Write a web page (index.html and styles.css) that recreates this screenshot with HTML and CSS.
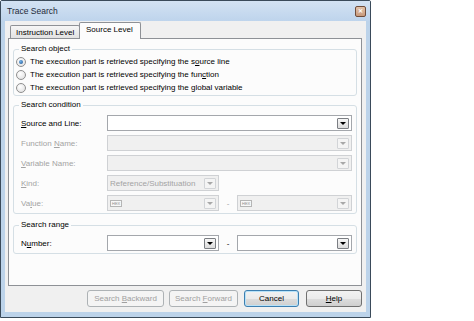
FILE: index.html
```html
<!DOCTYPE html>
<html lang="en">
<head>
  <meta charset="UTF-8">
  <title>Trace Search</title>
  <link rel="stylesheet" href="styles.css">
</head>
<body>
  <div class="window">
    <div class="titlebar">
      <span class="title">Trace Search</span>
      <span class="close">&#x2715;</span>
    </div>

    <div class="client">
      <div class="tabs">
        <div class="tab">Instruction Level</div>
        <div class="tab active">Source Level</div>
      </div>

      <div class="panel">
        <fieldset class="group g-object">
          <legend>Search object</legend>
          <label class="radio"><span class="dot checked"></span><span>The execution part is retrieved specifying the s<u>o</u>urce line</span></label>
          <label class="radio"><span class="dot"></span><span>The execution part is retrieved specifying the fun<u>c</u>tion</span></label>
          <label class="radio"><span class="dot"></span><span>The execution part is retrieved specifying the global variable</span></label>
        </fieldset>

        <fieldset class="group g-cond">
          <legend>Search condition</legend>
          <div class="form-grid">
            <span class="lbl"><u>S</u>ource and Line:</span>
            <div class="combo"><span class="field"></span><span class="arrow"></span></div>

            <span class="lbl off">Function <u>N</u>ame:</span>
            <div class="combo off"><span class="field"></span><span class="arrow"></span></div>

            <span class="lbl off"><u>V</u>ariable Name:</span>
            <div class="combo off"><span class="field"></span><span class="arrow"></span></div>

            <span class="lbl off"><u>K</u>ind:</span>
            <div class="pair">
              <div class="combo off short"><span class="field">Reference/Substituation</span><span class="arrow"></span></div>
            </div>

            <span class="lbl off">Va<u>l</u>ue:</span>
            <div class="pair">
              <div class="combo off short"><span class="field"><span class="hex">HEX</span></span><span class="arrow"></span></div>
              <span class="dash off">-</span>
              <div class="combo off rest"><span class="field"><span class="hex">HEX</span></span><span class="arrow"></span></div>
            </div>
          </div>
        </fieldset>

        <fieldset class="group g-range">
          <legend>Search range</legend>
          <div class="form-grid">
            <span class="lbl">N<u>u</u>mber:</span>
            <div class="pair">
              <div class="combo short"><span class="field"></span><span class="arrow"></span></div>
              <span class="dash">-</span>
              <div class="combo rest"><span class="field"></span><span class="arrow"></span></div>
            </div>
          </div>
        </fieldset>
      </div>

      <div class="buttons">
        <button class="btn off b-back">Search <u>B</u>ackward</button>
        <button class="btn off b-fwd">Search <u>F</u>orward</button>
        <button class="btn default b-cancel">Cancel</button>
        <button class="btn b-help"><u>H</u>elp</button>
      </div>
    </div>
  </div>
</body>
</html>
```

FILE: styles.css
```css
body {
  margin: 0;
  background-color: #ffffff;
  font-family: "Liberation Sans", Arial, sans-serif;
  font-size: 8px;
  color: #000000;
}

.window {
  width: 371px;
  height: 318px;
  box-sizing: border-box;
  border: 1px solid #3a4a5a;
  border-radius: 2px 2px 0 0;
  background-color: #bcd3ea;
  display: flex;
  flex-direction: column;
}

.titlebar {
  height: 20px;
  display: flex;
  align-items: center;
  justify-content: space-between;
  padding: 0 4px 0 6px;
  background: linear-gradient(#d3e2f3, #bed4ec);
}

.title {
  font-size: 8.5px;
  color: #1e2a38;
}

.close {
  width: 9px;
  height: 9px;
  border: 1px solid #6f4c3a;
  border-radius: 2px;
  background: linear-gradient(#e3c3aa, #c89a7c);
  color: #ffffff;
  font-size: 6px;
  line-height: 9px;
  text-align: center;
  font-weight: bold;
}

.client {
  flex: 1;
  margin: 0 4px 5px 4px;
  padding: 1px 4px 0 3px;
  background-color: #f0f0f0;
  display: flex;
  flex-direction: column;
}

/* tabs */
.tabs {
  display: flex;
  align-items: flex-end;
  height: 16px;
  padding-left: 2px;
}

.tab {
  height: 13px;
  line-height: 13px;
  box-sizing: border-box;
  width: 70px;
  padding-left: 5px;
  border: 1px solid #8e9196;
  border-bottom: none;
  border-radius: 2px 2px 0 0;
  background: linear-gradient(#f6f6f6, #e2e2e2);
}

.tab.active {
  width: 62px;
  height: 17px;
  line-height: 14px;
  margin-left: -1px;
  margin-bottom: -1px;
  padding-left: 6px;
  background: #fcfcfc;
  position: relative;
  z-index: 1;
}

.panel {
  height: 248px;
  box-sizing: border-box;
  border: 1px solid #8e9196;
  background-color: #fcfcfc;
  padding: 0 4px;
}

/* group boxes */
.group {
  margin: 0;
  padding: 0 3px 0 0;
  border: 1px solid #d5dfe5;
  border-radius: 3px;
  min-width: 0;
}

.group legend {
  margin-left: 5px;
  padding: 0 2px;
  line-height: 10px;
  height: 10px;
}

.g-object {
  margin-top: 5px;
  padding-top: 1px;
  padding-bottom: 1px;
}

.g-cond {
  margin-top: 4px;
  padding-top: 5px;
  padding-bottom: 2px;
}

.g-range {
  margin-top: 6px;
  padding-top: 5px;
  padding-bottom: 2px;
}

.radio {
  display: flex;
  align-items: center;
  height: 13px;
  padding-left: 2px;
  gap: 4px;
}

.dot {
  width: 10px;
  height: 10px;
  box-sizing: border-box;
  border: 1px solid #8f8f8f;
  border-radius: 50%;
  background: radial-gradient(circle at 40% 35%, #ffffff, #dcdcdc);
  display: flex;
  align-items: center;
  justify-content: center;
}

.dot.checked::after {
  content: '';
  width: 4px;
  height: 4px;
  border-radius: 50%;
  background: radial-gradient(circle at 40% 35%, #6fb2ea, #1c4f8c);
}

/* form rows */
.form-grid {
  display: grid;
  grid-template-columns: 86px 245px;
  grid-auto-rows: 16px;
  row-gap: 4px;
  padding-left: 7px;
  align-items: center;
}

.lbl.off,
.dash.off {
  color: #a3a3a3;
}

.pair {
  display: flex;
  align-items: center;
  height: 16px;
}

.dash {
  width: 18px;
  text-align: center;
}

.combo {
  height: 16px;
  box-sizing: border-box;
  border: 1px solid #a4a7ac;
  background-color: #ffffff;
  display: flex;
  align-items: center;
  padding: 0 2px 0 2px;
}

.combo.short {
  width: 112px;
}

.combo.rest {
  width: 115px;
}

.combo.off {
  border-color: #cfd1d4;
  background-color: #f0f0f0;
}

.field {
  flex: 1;
  display: flex;
  align-items: center;
  color: #a3a3a3;
  white-space: nowrap;
  overflow: hidden;
}

.arrow {
  width: 12px;
  height: 11px;
  box-sizing: border-box;
  border: 1px solid #7b7e83;
  border-radius: 1px;
  background: linear-gradient(#f7f7f7, #dcdcdc);
  display: flex;
  align-items: center;
  justify-content: center;
}

.arrow::after {
  content: '';
  border-left: 3px solid transparent;
  border-right: 3px solid transparent;
  border-top: 3px solid #000000;
}

.combo.off .arrow {
  border-color: #d2d4d7;
  background: #f4f4f4;
}

.combo.off .arrow::after {
  border-top-color: #a8a8a8;
}

.hex {
  font-size: 4px;
  line-height: 5px;
  padding: 0 1px;
  border: 1px solid #b5b5b5;
  color: #8a8a8a;
  background-color: #f8f8f8;
}

/* bottom buttons */
.buttons {
  display: flex;
  justify-content: flex-end;
  margin-top: 4px;
  gap: 5px;
}

.btn {
  height: 17px;
  padding: 0;
  font-family: inherit;
  font-size: 8px;
  color: #000000;
  border: 1px solid #707070;
  border-radius: 3px;
  background: linear-gradient(#f2f2f2 0%, #ebebeb 50%, #dddddd 51%, #cfcfcf 100%);
}

.btn.off {
  color: #a0a0a0;
  border-color: #adb2b5;
  background: #f4f4f4;
}

.btn.default {
  border-color: #3c7fb1;
  box-shadow: inset 0 0 0 1px #b8e2f8;
}

.b-back { width: 77px; }
.b-fwd { width: 69px; }
.b-cancel { width: 55px; margin-left: 1px; }
.b-help { width: 56px; margin-left: 2px; }
```
